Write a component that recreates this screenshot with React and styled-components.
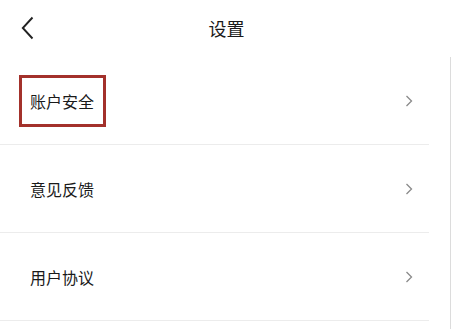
import React from "react";
import styled, { createGlobalStyle } from "styled-components";

const Global = createGlobalStyle`
  html, body { margin: 0; padding: 0; background: #fff; }
  body { font-family: "Noto Sans CJK SC", "Noto Sans", sans-serif; color: #222; }
`;

const Page = styled.div`
  width: 451px;
  height: 329px;
  background: #fff;
  overflow: hidden;
  display: flex;
  flex-direction: column;
`;

const Header = styled.div`
  height: 57px;
  display: grid;
  grid-template-columns: 60px 1fr 60px;
  align-items: center;
`;

const Back = styled.div`
  padding-left: 21px;
  display: flex;
  align-items: center;
  margin-top: -2px;
`;

const Title = styled.div`
  text-align: center;
  font-size: 18px;
  color: #1a1a1a;
  margin-top: -1px;
  padding-left: 2px;
`;

const List = styled.div`
  flex: 1;
  display: flex;
  flex-direction: column;
  border-right: 1px solid #dcdcdc;
`;

const Row = styled.div`
  height: 87px;
  border-bottom: 1px solid #ececec;
  display: flex;
  align-items: center;
  justify-content: space-between;
  padding: 0 16px 0 30px;
  margin-right: 21px;
`;

const Label = styled.span`
  font-size: 16px;
  color: #1a1a1a;
  position: relative;
  &::after {
    content: "";
    display: ${(p) => (p.$hl ? "block" : "none")};
    position: absolute;
    left: -11px;
    top: -14px;
    width: 81px;
    height: 46px;
    border: 3px solid #a3312b;
  }
`;

const Chevron = () => (
  <svg width="8" height="12" viewBox="0 0 8 12">
    <path d="M1.5 1 L6.5 6 L1.5 11" fill="none" stroke="#8a8a8a" strokeWidth="1.3" />
  </svg>
);

const BackIcon = () => (
  <svg width="13" height="24" viewBox="0 0 13 24">
    <path d="M11.5 1.5 L1.8 12 L11.5 22.5" fill="none" stroke="#222" strokeWidth="1.9" />
  </svg>
);

const items = [
  { label: "账户安全", hl: true },
  { label: "意见反馈" },
  { label: "用户协议" },
];

export default function App() {
  return (
    <Page>
      <Global />
      <Header>
        <Back>
          <BackIcon />
        </Back>
        <Title>设置</Title>
        <div />
      </Header>
      <List>
        {items.map((it) => (
          <Row key={it.label}>
            <Label $hl={it.hl}>{it.label}</Label>
            <Chevron />
          </Row>
        ))}
      </List>
    </Page>
  );
}
